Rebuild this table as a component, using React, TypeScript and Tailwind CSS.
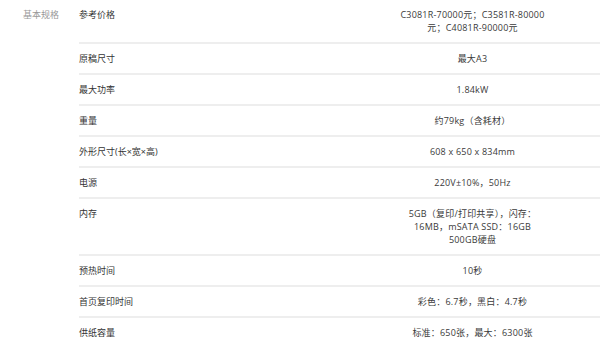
const rows: { label: string; value: string[] }[] = [
  { label: "参考价格", value: ["C3081R-70000元；C3581R-80000", "元；C4081R-90000元"] },
  { label: "原稿尺寸", value: ["最大A3"] },
  { label: "最大功率", value: ["1.84kW"] },
  { label: "重量", value: ["约79kg（含耗材）"] },
  { label: "外形尺寸(长×宽×高)", value: ["608 x 650 x 834mm"] },
  { label: "电源", value: ["220V±10%，50Hz"] },
  { label: "内存", value: ["5GB（复印/打印共享），闪存：", "16MB，mSATA SSD：16GB", "500GB硬盘"] },
  { label: "预热时间", value: ["10秒"] },
  { label: "首页复印时间", value: ["彩色：6.7秒，黑白：4.7秒"] },
  { label: "供纸容量", value: ["标准：650张，最大：6300张"] },
];

export default function App() {
  return (
    <div
      className="flex h-[342px] w-[600px] overflow-hidden bg-white text-[9px] leading-[13px]"
      style={{ fontFamily: '"Open Sans", "Noto Sans CJK SC", sans-serif' }}
    >
      {/* group title */}
      <div className="w-[79px] shrink-0 pl-[23px] pt-[8px] text-[#999]">基本规格</div>

      {/* spec rows */}
      <div className="flex-1">
        {rows.map((row) => (
          <div key={row.label} className="flex border-b-2 border-[#eeeeee] py-[8px]">
            <div className="w-[266px] shrink-0 text-[#333]">{row.label}</div>
            <div className="flex flex-1 flex-col items-center whitespace-nowrap text-[#3a3a3a]">
              {row.value.map((line) => (
                <div key={line} className="tracking-[0.2px]">{line}</div>
              ))}
            </div>
          </div>
        ))}
      </div>
    </div>
  );
}
